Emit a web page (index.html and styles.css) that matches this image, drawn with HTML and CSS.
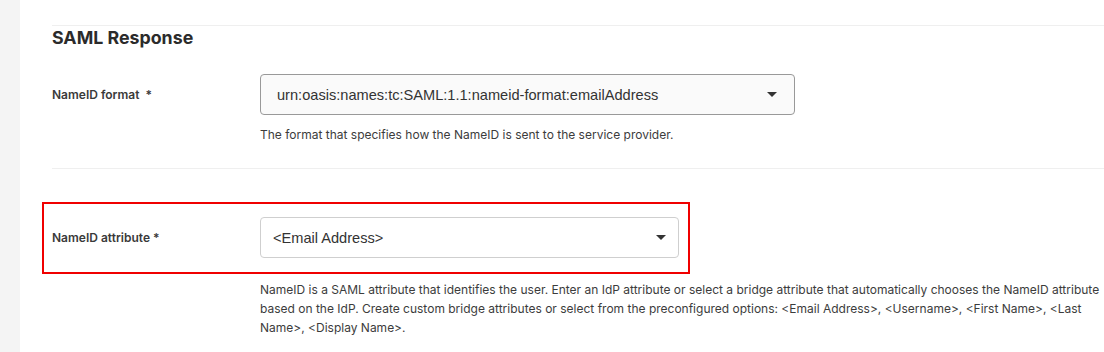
FILE: index.html
```html
<!DOCTYPE html>
<html lang="en">

<head>
    <meta charset="UTF-8">
    <meta name="viewport" content="width=device-width, initial-scale=1.0">
    <title>SAML Response</title>
    <link rel="stylesheet" href="styles.css">
</head>

<body>
    <div class="page">
        <div class="side-strip"></div>

        <div class="main">
            <!-- SAML Response -->
            <div class="section">
                <h2 class="section-title">SAML Response</h2>

                <div class="field-row">
                    <div class="field-label">NameID format&nbsp; *</div>
                    <div class="field-body">
                        <div class="select select-filled select-wide">
                            <span class="select-value">urn:oasis:names:tc:SAML:1.1:nameid-format:emailAddress</span>
                            <svg class="select-caret" width="10" height="5" viewBox="0 0 10 5"><path d="M0 0h10L5 5z" /></svg>
                        </div>
                        <div class="field-help">The format that specifies how the NameID is sent to the service provider.</div>
                    </div>
                </div>
            </div>

            <div class="section section-next">
                <div class="field-row highlight">
                    <div class="field-label">NameID attribute *</div>
                    <div class="field-body">
                        <div class="select select-narrow">
                            <span class="select-value">&lt;Email Address&gt;</span>
                            <svg class="select-caret" width="10" height="5" viewBox="0 0 10 5"><path d="M0 0h10L5 5z" /></svg>
                        </div>
                    </div>
                </div>
                <div class="field-help field-help-long">NameID is a SAML attribute that identifies the user. Enter an IdP attribute or select a bridge attribute that automatically chooses the NameID attribute based on the IdP. Create custom bridge attributes or select from the preconfigured options: &lt;Email Address&gt;, &lt;Username&gt;, &lt;First Name&gt;, &lt;Last Name&gt;, &lt;Display Name&gt;.</div>
            </div>
        </div>
    </div>
</body>

</html>
```

FILE: styles.css
```css
:root {
    --text-color: #333333;
    --label-color: #3a3a3a;
    --divider: #efefef;
    --strip-bg: #f4f4f4;
}

body {
    margin: 0;
    background: #ffffff;
    color: var(--text-color);
    font-family: 'Liberation Sans', Arial, sans-serif;
    overflow: hidden;
}

.page {
    display: flex;
    min-height: 352px;
}

.side-strip {
    width: 20px;
    flex: 0 0 20px;
    background: var(--strip-bg);
}

.main {
    flex: 1;
    padding-left: 32px;
    padding-top: 25px;
    min-width: 0;
}

.section {
    border-top: 1px solid var(--divider);
    padding-bottom: 24px;
}

.section-next {
    padding-top: 33px;
}

.section-title {
    margin: 0 0 24px;
    font-family: Inter, 'Noto Sans', sans-serif;
    font-size: 17.8px;
    line-height: 24px;
    font-weight: 700;
    color: #2b2b2b;
}

.field-row {
    display: grid;
    grid-template-columns: 208px auto;
    align-items: start;
}

.field-label {
    font-family: Inter, 'Noto Sans', sans-serif;
    font-size: 12px;
    font-weight: 600;
    color: var(--label-color);
    line-height: 41px;
}

.highlight {
    width: fit-content;
    margin-left: -10px;
    border: 2px solid #f00000;
    padding: 13px 9px 14px 8px;
}

.select {
    box-sizing: border-box;
    height: 41px;
    display: flex;
    align-items: center;
    justify-content: space-between;
    border: 1px solid #cfcfcf;
    border-radius: 4px;
    background: #ffffff;
    padding: 0 12px 0 12px;
}

.select-filled {
    background: #fafafa;
    border-color: #999999;
    padding-left: 16px;
    padding-right: 17px;
}

.select-wide {
    width: 535px;
}

.select-narrow {
    width: 419px;
}

.select-value {
    font-size: 14.6px;
    color: #333333;
}

.select-caret {
    fill: #333333;
}

.field-help {
    margin-top: 10px;
    font-family: Inter, 'Noto Sans', sans-serif;
    font-size: 12px;
    line-height: 19px;
    color: #3c3c3c;
}

.field-help-long {
    margin-top: 6px;
    margin-left: 208px;
    width: 846px;
}
```
